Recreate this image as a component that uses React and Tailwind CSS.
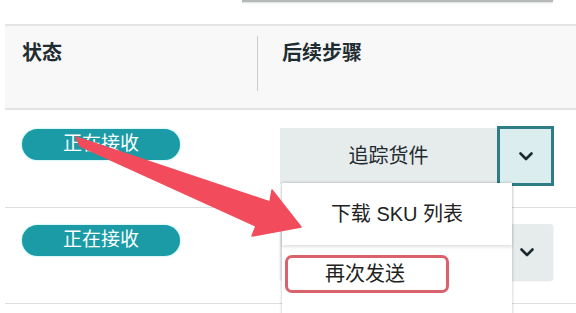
import React from "react";

function Chevron() {
  return (
    <svg width="14" height="9" viewBox="0 0 14 9" fill="none">
      <path d="M1.5 1.5 L7 7 L12.5 1.5" stroke="#1c2a30" strokeWidth="2.6" strokeLinecap="round" strokeLinejoin="round" />
    </svg>
  );
}

function StatusBadge() {
  return (
    <span className="flex h-[31px] w-[158px] items-center justify-center rounded-full bg-[#1a9ba6] text-[19px] text-white shadow-[0_0_2px_#7fe3ea]">
      正在接收
    </span>
  );
}

export default function App() {
  return (
    <div
      className="relative h-[313px] w-[576px] overflow-hidden bg-white text-[#1f2c31]"
      style={{ fontFamily: '"Liberation Sans", "Noto Sans CJK SC", sans-serif' }}
    >
      {/* remnant of a field above */}
      <div className="ml-[242px] h-[2px] w-[311px] bg-[#b5b8b8] shadow-[0_1px_2px_rgba(0,0,0,0.15)]" />
      <div className="h-[22px]" />

      <div className="ml-[5px]">
        {/* header */}
        <div className="flex h-[86px] border-y-2 border-[#e2e4e4] bg-[#f8f8f8]">
          <div className="w-[252px] pl-[17px] pt-[12px] text-[20px] font-bold">状态</div>
          <div className="mt-[10px] h-[55px] w-px bg-[#c9cccc]" />
          <div className="pl-[24px] pt-[12px] text-[20px] font-bold">后续步骤</div>
        </div>

        {/* row 1 */}
        <div className="flex h-[98px] border-b border-[#dcdfdf]">
          <div className="w-[252px] pl-[17px] pt-[19px]">
            <StatusBadge />
          </div>
          <div className="flex items-center self-start pl-[23px] pt-[16px]">
            <div className="flex h-[56px] w-[217px] items-center justify-center bg-[#e6ebeb] text-[20px]">
              追踪货件
            </div>
            <div className="flex h-[60px] w-[57px] items-center justify-center border-[3px] border-[#2e7d84] bg-[#dcedf0]">
              <Chevron />
            </div>
          </div>
        </div>

        {/* row 2 */}
        <div className="flex h-[96px] border-b border-[#dcdfdf]">
          <div className="w-[252px] pl-[17px] pt-[17px]">
            <StatusBadge />
          </div>
          <div className="pl-[23px] pt-[16px]">
            <div className="flex h-[56px] w-[273px] items-center justify-end rounded-[3px] bg-[#e6ebeb] pr-[19px] shadow-[0_1px_2px_rgba(0,0,0,0.12)]">
              <Chevron />
            </div>
          </div>
        </div>
      </div>

      {/* open dropdown menu */}
      <div className="absolute left-[282px] top-[183px] h-[140px] w-[230px] bg-white shadow-[0_0_3px_rgba(0,0,0,0.25)]">
        <div className="flex h-[62px] items-center justify-center text-[20px] text-[#222] shadow-[0_2px_3px_rgba(0,0,0,0.12)]">
          下载 SKU 列表
        </div>
        <div className="ml-[3px] mt-[10px] flex h-[38px] w-[164px] items-center rounded-[7px] border-[3px] border-[#d9626c] pl-[37px] text-[20px] text-[#222]">
          再次发送
        </div>
      </div>

      {/* annotation arrow */}
      <svg className="pointer-events-none absolute left-0 top-0" width="576" height="313" viewBox="0 0 576 313">
        <polygon
          points="76,137 80,146 256,226 252,236 301,227 272,190 270,202"
          fill="#f24c5c"
          stroke="#f24c5c"
          strokeWidth="1.5"
          strokeLinejoin="round"
        />
      </svg>
    </div>
  );
}
